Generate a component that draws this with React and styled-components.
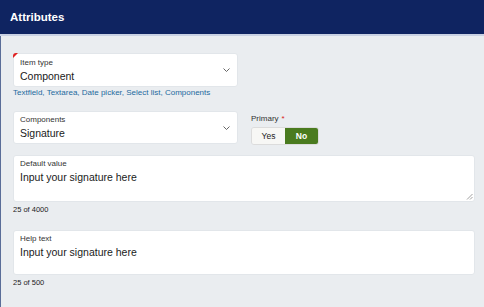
import React from "react";
import styled, { createGlobalStyle } from "styled-components";

const Global = createGlobalStyle`
  html, body {
    margin: 0;
    padding: 0;
    background: #eaedf0;
  }
  body {
    font-family: "Liberation Sans", Arial, sans-serif;
  }
`;

const Page = styled.div`
  width: 484px;
  height: 307px;
  display: flex;
  flex-direction: column;
  overflow: hidden;
`;

const Header = styled.div`
  height: 34px;
  background: #0f2461;
  border-bottom: 2px solid #c9d1e3;
  display: flex;
  align-items: center;
  padding-left: 10px;
  color: #fff;
  font-weight: 700;
  font-size: 11.5px;
`;

const Body = styled.div`
  flex: 1;
  background: #eaedf0;
  border-left: 1px solid #5a6d98;
  padding: 17px 10px 0 12px;
  display: flex;
  flex-direction: column;
`;

const Row = styled.div`
  display: flex;
  gap: 13px;
  align-items: flex-start;
  height: ${(p) => p.$h}px;
  margin-top: ${(p) => p.$top || 0}px;
`;

const Box = styled.div`
  position: relative;
  box-sizing: border-box;
  flex-shrink: 0;
  width: ${(p) => p.$w}px;
  height: ${(p) => p.$h}px;
  background: #fff;
  border-radius: 3px;
  border: 1px solid #e2e6ea;
  padding: ${(p) => p.$pt || 3}px 6px 0 6px;
  margin-top: ${(p) => p.$top || 0}px;
`;

const Required = styled.span`
  position: absolute;
  left: -1px;
  top: -1px;
  width: 0;
  height: 0;
  border-top: 5px solid #e02020;
  border-right: 5px solid transparent;
  border-top-left-radius: 3px;
`;

const Label = styled.div`
  font-size: 8px;
  line-height: 10px;
  color: #333;
  white-space: nowrap;
`;

const Value = styled.div`
  font-size: 10.5px;
  line-height: 13px;
  color: #1a1a1a;
  margin-top: 2px;
`;

const Chevron = styled.svg`
  position: absolute;
  right: 7px;
  top: 50%;
  margin-top: -2px;
`;

const Grip = styled.svg`
  position: absolute;
  right: 1px;
  bottom: 1px;
`;

const Helper = styled.div`
  font-size: 8px;
  line-height: 11px;
  color: #1d6a9e;
  margin-top: 0px;
`;

const Counter = styled.div`
  font-size: 7.5px;
  line-height: 10px;
  color: #222;
  margin-top: 3px;
`;

const ToggleGroup = styled.div`
  display: flex;
  flex-direction: column;
  padding-top: 3px;
`;

const Asterisk = styled.span`
  color: #d92020;
  margin-left: 3px;
`;

const Toggle = styled.div`
  display: flex;
  margin-top: 3px;
  border: 1px solid #dcdcdc;
  border-radius: 3px;
  overflow: hidden;
  width: 68px;
  height: 18px;
  box-sizing: border-box;
`;

const ToggleBtn = styled.div`
  flex: 1;
  display: flex;
  align-items: center;
  justify-content: center;
  font-size: 8.5px;
  font-weight: ${(p) => (p.$active ? 700 : 400)};
  background: ${(p) => (p.$active ? "#4a7b1f" : "#f7f7f5")};
  color: ${(p) => (p.$active ? "#fff" : "#222")};
`;

const Down = () => (
  <Chevron width="7" height="4" viewBox="0 0 7 4">
    <path d="M0.5 0.5 L3.5 3.5 L6.5 0.5" fill="none" stroke="#555" strokeWidth="0.9" />
  </Chevron>
);

export default function App() {
  return (
    <Page>
      <Global />
      <Header>Attributes</Header>
      <Body>
        <Row $h={34}>
          <Box $w={225} $h={34} $pt={4}>
            <Required />
            <Label>Item type</Label>
            <Value>Component</Value>
            <Down />
          </Box>
        </Row>
        <Helper>Textfield, Textarea, Date picker, Select list, Components</Helper>
        <Row $h={33} $top={13}>
          <Box $w={225} $h={33} $pt={3}>
            <Label>Components</Label>
            <Value>Signature</Value>
            <Down />
          </Box>
          <ToggleGroup>
            <Label>
              Primary<Asterisk>*</Asterisk>
            </Label>
            <Toggle>
              <ToggleBtn>Yes</ToggleBtn>
              <ToggleBtn $active>No</ToggleBtn>
            </Toggle>
          </ToggleGroup>
        </Row>
        <Box $w={462} $h={47} $top={11}>
          <Label>Default value</Label>
          <Value>Input your signature here</Value>
          <Grip width="7" height="7" viewBox="0 0 7 7">
            <path d="M6.5 1 L1 6.5 M6.5 4 L4 6.5" stroke="#888" strokeWidth="0.8" />
          </Grip>
        </Box>
        <Counter>25 of 4000</Counter>
        <Box $w={462} $h={45} $top={15}>
          <Label>Help text</Label>
          <Value>Input your signature here</Value>
        </Box>
        <Counter>25 of 500</Counter>
      </Body>
    </Page>
  );
}
